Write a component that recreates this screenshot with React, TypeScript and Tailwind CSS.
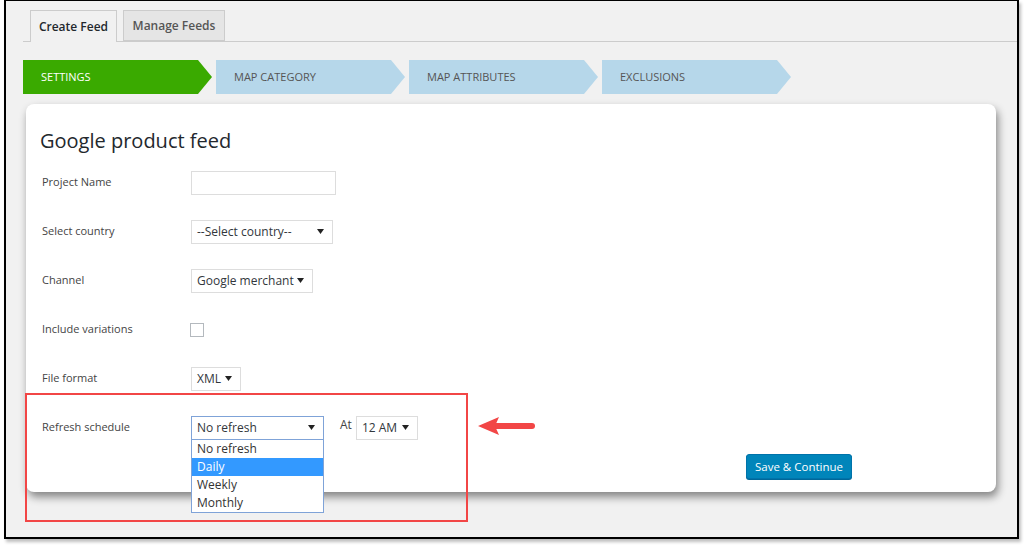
import React from 'react';

const font = { fontFamily: '"Open Sans", "Noto Sans", Arial, sans-serif' };

const steps = [
  { label: 'SETTINGS', active: true },
  { label: 'MAP CATEGORY', active: false },
  { label: 'MAP ATTRIBUTES', active: false },
  { label: 'EXCLUSIONS', active: false },
];

function Caret() {
  return (
    <svg width="7" height="5" viewBox="0 0 7 5" className="shrink-0">
      <path d="M0 0h7L3.5 5z" fill="#222" />
    </svg>
  );
}

function Select({ value, width, focused }: { value: string; width: string; focused?: boolean }) {
  return (
    <div
      className={`flex h-[24px] ${width} items-center justify-between border bg-white pl-[5px] pr-[8px] text-[12px] text-[#32373c] ${
        focused ? 'border-[#7fa3d8]' : 'border-[#dddddd]'
      }`}
    >
      <span>{value}</span>
      <Caret />
    </div>
  );
}

function Row({ label, children }: { label: string; children?: React.ReactNode }) {
  return (
    <div className="flex h-[49px] items-center">
      <div className="w-[151px] pl-[2px] text-[11px] text-[#444]">{label}</div>
      {children}
    </div>
  );
}

export default function App() {
  return (
    <div className="h-[547px] w-[1024px] overflow-hidden bg-white" style={font}>
      <div className="relative ml-[4px] h-[539px] w-[1015px] border-2 border-t border-black bg-[#f1f1f1] shadow-[2px_3px_3px_rgba(0,0,0,0.25)]">
        {/* Tabs */}
        <div className="ml-[17px] flex gap-[6px] border-b border-[#cccccc] pl-[7px] pt-[9px]">
          <div className="-mb-px flex h-[32px] w-[87px] items-center justify-center border border-b-0 border-[#cccccc] bg-[#f1f1f1] text-[12px] font-semibold text-[#23282d]">
            Create Feed
          </div>
          <div className="flex h-[31px] w-[102px] items-center justify-center border border-[#cccccc] bg-[#e5e5e5] text-[12px] font-semibold text-[#555]">
            Manage Feeds
          </div>
        </div>

        {/* Steps */}
        <div className="ml-[17px] mt-[18px] flex gap-[4px]">
          {steps.map((s) => (
            <div
              key={s.label}
              className={`flex h-[34px] w-[189px] items-center pl-[18px] text-[11px] [clip-path:polygon(0_0,calc(100%-14px)_0,100%_50%,calc(100%-14px)_100%,0_100%)] ${
                s.active ? 'bg-[#3aaa00] text-white' : 'bg-[#b6d7ea] text-[#555]'
              }`}
            >
              {s.label}
            </div>
          ))}
        </div>

        {/* Card */}
        <div className="ml-[20px] mt-[10px] h-[388px] w-[970px] rounded-[8px] bg-white px-[14px] pt-[23px] shadow-[2px_5px_8px_rgba(0,0,0,0.45)]">
          <h1 className="h-[28px] text-[20px] leading-[28px] text-[#23282d]">Google product feed</h1>
          <div className="mt-[3px]">
            <Row label="Project Name">
              <div className="h-[24px] w-[145px] border border-[#dddddd] bg-white" />
            </Row>
            <Row label="Select country">
              <Select value="--Select country--" width="w-[142px]" />
            </Row>
            <Row label="Channel">
              <Select value="Google merchant" width="w-[122px]" />
            </Row>
            <Row label="Include variations">
              <div className="-ml-px h-[14px] w-[14px] border border-[#b4b9be] bg-white" />
            </Row>
            <Row label="File format">
              <Select value="XML" width="w-[50px]" />
            </Row>
            <Row label="Refresh schedule">
              <div className="relative">
                <Select value="No refresh" width="w-[133px]" focused />
                <div className="absolute left-0 top-[24px] z-10 w-[133px] border border-t-0 border-[#7fa3d8] bg-white text-[12px] text-[#333]">
                  <div className="h-[18px] pl-[5px] leading-[18px]">No refresh</div>
                  <div className="h-[18px] bg-[#3399ff] pl-[5px] leading-[18px] text-white">Daily</div>
                  <div className="h-[18px] pl-[5px] leading-[18px]">Weekly</div>
                  <div className="h-[18px] pl-[5px] leading-[18px]">Monthly</div>
                </div>
              </div>
              <span className="ml-[16px] mr-[4px] -mt-[5px] text-[12px] text-[#444]">At</span>
              <Select value="12 AM" width="w-[62px]" />
            </Row>
          </div>
          <div className="ml-[706px] mt-[1px]">
            <button className="h-[25px] w-[106px] rounded-[3px] border border-[#0073aa] bg-[#0085ba] text-[11.5px] text-white shadow-[0_1px_0_#006799]">
              Save &amp; Continue
            </button>
          </div>
        </div>

        {/* Annotation */}
        <div className="pointer-events-none absolute left-[19px] top-[392px] h-[129px] w-[443px] border-[2.5px] border-[#f24646]" />
        <svg className="pointer-events-none absolute left-[470px] top-[413px]" width="62" height="24" viewBox="0 0 62 24">
          <path d="M20 12H56" stroke="#f24646" strokeWidth="6" strokeLinecap="round" />
          <path d="M2 12L23 3L19 12L23 21Z" fill="#f24646" />
        </svg>
      </div>
    </div>
  );
}
